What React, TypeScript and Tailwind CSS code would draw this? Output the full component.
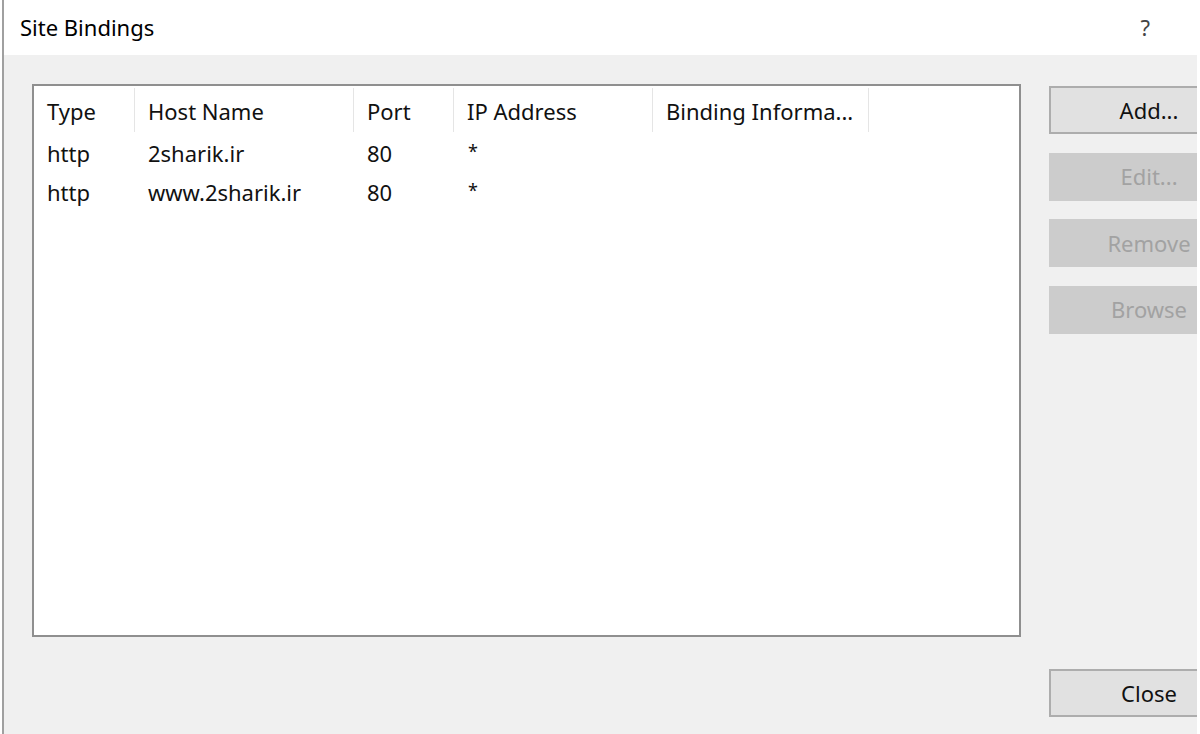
const font = { fontFamily: '"Noto Sans", "Open Sans", sans-serif' };

const columns = ["Type", "Host Name", "Port", "IP Address", "Binding Informa..."];

const rows = [
  ["http", "2sharik.ir", "80", "*", ""],
  ["http", "www.2sharik.ir", "80", "*", ""],
];

function DialogButton({ label, disabled }: { label: string; disabled?: boolean }) {
  return (
    <div
      className={
        disabled
          ? "w-[200px] h-[48px] flex items-center justify-center bg-[#cccccc] border-2 border-[#cccccc] text-[#a2a2a2] text-[22px]"
          : "w-[200px] h-[48px] flex items-center justify-center bg-[#e1e1e1] border-2 border-[#adadad] text-[#111] text-[22px]"
      }
    >
      {label}
    </div>
  );
}

export default function App() {
  return (
    <div className="w-[1200px] h-[734px] flex bg-white overflow-hidden" style={font}>
      <div className="w-[2px] bg-white" />
      <div className="w-[2px] bg-[#a0a0a0]" />
      <div className="flex-1 flex flex-col min-w-0">
        {/* title bar */}
        <div className="h-[55px] bg-white flex items-center justify-between pl-[16px] pr-[50px]">
          <span className="text-[22px] text-black">Site Bindings</span>
          <span className="text-[22px] text-[#444]">?</span>
        </div>

        {/* body */}
        <div className="flex-1 flex bg-[#f0f0f0] mr-[3px] overflow-hidden pl-[28px] pt-[29px]">
          <div className="w-[989px] h-[553px] shrink-0 bg-white border-2 border-[#8f8f8f] text-[22px] text-[#111]">
            <div className="grid grid-cols-[101px_219px_100px_199px_216px_1fr] h-[48px]">
              {columns.map((c) => (
                <div key={c} className="flex items-center pl-[13px] pt-[3px] border-r border-[#e5e5e5] my-[2px]">
                  {c}
                </div>
              ))}
              <div />
            </div>
            {rows.map((r, i) => (
              <div key={i} className="grid grid-cols-[101px_219px_100px_199px_216px_1fr] h-[39px]">
                {r.map((cell, j) => (
                  <div key={j} className={j === 3 ? "flex items-center pl-[14px] text-[18px] pb-[5px]" : "flex items-center pl-[13px]"}>
                    {cell}
                  </div>
                ))}
                <div />
              </div>
            ))}
          </div>

          <div className="ml-[28px] flex flex-col justify-between pt-[2px] pb-[17px] shrink-0">
            <div className="flex flex-col gap-[18.5px]">
              <DialogButton label="Add..." />
              <DialogButton label="Edit..." disabled />
              <DialogButton label="Remove" disabled />
              <DialogButton label="Browse" disabled />
            </div>
            <DialogButton label="Close" />
          </div>
        </div>
      </div>
    </div>
  );
}
